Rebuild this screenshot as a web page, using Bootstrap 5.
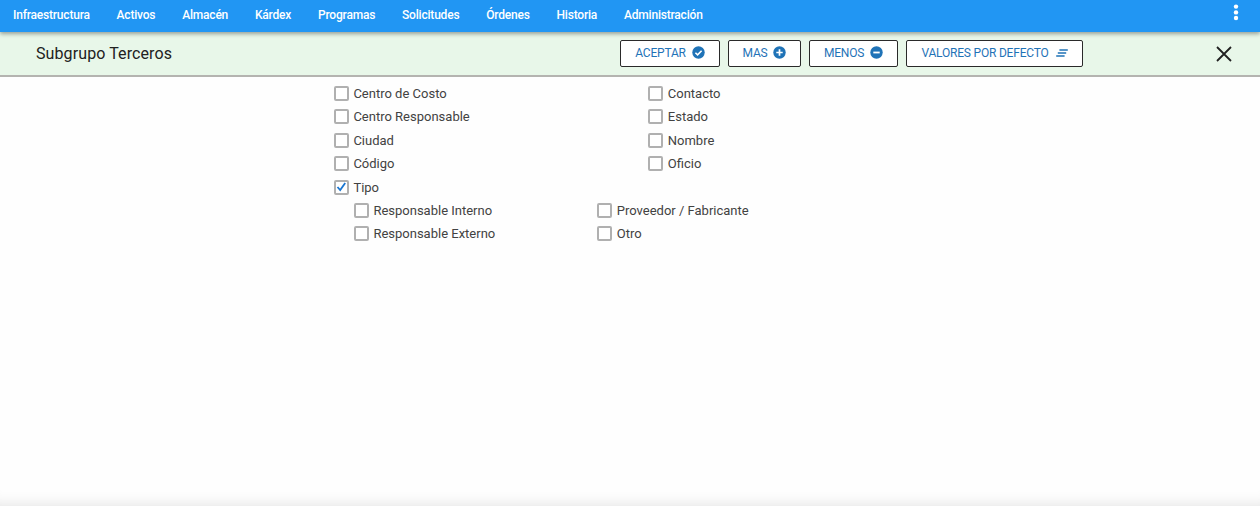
<!DOCTYPE html>
<html lang="es">
<head>
<meta charset="utf-8">
<title>Subgrupo Terceros</title>
<link href="https://cdn.jsdelivr.net/npm/bootstrap@5.3.0/dist/css/bootstrap.min.css" rel="stylesheet">
<style>
html,body{height:100%;margin:0}
body{font-family:Roboto,"Liberation Sans",sans-serif;background:#fefefe;overflow:hidden}
.app-shell{height:506px;display:flex;flex-direction:column;box-shadow:inset 0 -14px 14px -12px rgba(0,0,0,.1)}
.top-bar{height:32px;background:#2196f3;padding:0 13px;box-shadow:0 2px 4px rgba(0,0,0,.35);position:relative;z-index:2;flex:none}
.top-links{display:flex;gap:26.85px}
.top-links a{color:#fff;font-size:12px;font-weight:500;letter-spacing:-.2px;text-decoration:none;line-height:30px;white-space:nowrap}
.dots-ico{display:block;position:absolute;right:21px;top:4px}
.title-bar{height:45px;flex:none;background:#e8f7e9;border-bottom:2px solid #b4b4b0;padding-left:36px;position:relative}
.title-txt{font-size:16px;color:#212121;letter-spacing:.1px;width:584px;flex:none;padding-top:1px}
.act-btn{height:27px;border:1px solid #2a2a2a;border-radius:2px;background:#fff;color:#1f73b7;font-size:12px;letter-spacing:-.2px;display:flex;align-items:center;justify-content:center;gap:6px;padding:0 0 2px;white-space:nowrap;line-height:1}
.close-ico{position:absolute;left:1216px;top:14px}
.form-zone{padding:4.6px 0 0 334px;font-size:13px;color:#424242}
.opt-grid{display:grid;grid-template-columns:314.4px auto;width:500px}
.sub-grid{display:grid;grid-template-columns:243.4px auto;margin-left:20px;width:430px}
.opt{display:flex;align-items:center;gap:4.4px;height:23.5px;white-space:nowrap}
.sub-grid .opt{height:23px}
.tick{width:15px;height:15px;border:2px solid #b0b0b0;border-radius:2px;background:#fff;flex:none;display:flex;align-items:center;justify-content:center}
</style>
</head>
<body>
<div class="app-shell">
  <nav class="top-bar">
    <div class="top-links">
      <a href="#">Infraestructura</a><a href="#">Activos</a><a href="#">Almacén</a><a href="#">Kárdex</a><a href="#">Programas</a><a href="#">Solicitudes</a><a href="#">Órdenes</a><a href="#">Historia</a><a href="#">Administración</a>
    </div>
    <svg class="dots-ico" width="6" height="18" viewBox="0 0 6 18" fill="#fff"><circle cx="3" cy="2.6" r="2.2"/><circle cx="3" cy="8.4" r="2.2"/><circle cx="3" cy="14" r="2.2"/></svg>
  </nav>
  <div class="title-bar d-flex align-items-center">
    <div class="title-txt">Subgrupo Terceros</div>
    <div class="d-flex gap-2">
      <button class="act-btn" style="width:100px">ACEPTAR
        <svg width="13" height="13" viewBox="0 0 13 13"><circle cx="6.5" cy="6.5" r="6.2" fill="#1f73b7"/><path d="M3.4 6.7l2.2 2.2 4-4.2" fill="none" stroke="#fff" stroke-width="1.6"/></svg></button>
      <button class="act-btn" style="width:73px">MAS
        <svg width="13" height="13" viewBox="0 0 13 13"><circle cx="6.5" cy="6.5" r="6.2" fill="#1f73b7"/><path d="M3.3 6.5h6.4M6.5 3.3v6.4" fill="none" stroke="#fff" stroke-width="1.7"/></svg></button>
      <button class="act-btn" style="width:89px">MENOS
        <svg width="13" height="13" viewBox="0 0 13 13"><circle cx="6.5" cy="6.5" r="6.2" fill="#1f73b7"/><path d="M3.3 6.5h6.4" fill="none" stroke="#fff" stroke-width="1.8"/></svg></button>
      <button class="act-btn" style="width:177px;gap:7px">VALORES POR DEFECTO
        <svg width="12" height="8" viewBox="0 0 12 8" fill="none" stroke="#1f73b7" stroke-width="1.4"><path d="M3.4 1h8.4M1.8 4h8.4M.2 7h8.4"/></svg></button>
    </div>
    <svg class="close-ico" width="16" height="16" viewBox="0 0 16 16" fill="none" stroke="#212121" stroke-width="1.8"><path d="M1 1l14 14M15 1L1 15"/></svg>
  </div>
  <div class="form-zone">
    <div class="opt-grid">
      <label class="opt"><span class="tick"></span>Centro de Costo</label>
      <label class="opt"><span class="tick"></span>Contacto</label>
      <label class="opt"><span class="tick"></span>Centro Responsable</label>
      <label class="opt"><span class="tick"></span>Estado</label>
      <label class="opt"><span class="tick"></span>Ciudad</label>
      <label class="opt"><span class="tick"></span>Nombre</label>
      <label class="opt"><span class="tick"></span>Código</label>
      <label class="opt"><span class="tick"></span>Oficio</label>
      <label class="opt"><span class="tick"><svg width="11" height="10" viewBox="0 0 11 10" fill="none" stroke="#1976d2" stroke-width="1.8"><path d="M1.5 5l2.7 3 5-7"/></svg></span>Tipo</label>
    </div>
    <div class="sub-grid">
      <label class="opt"><span class="tick"></span>Responsable Interno</label>
      <label class="opt"><span class="tick"></span>Proveedor / Fabricante</label>
      <label class="opt"><span class="tick"></span>Responsable Externo</label>
      <label class="opt"><span class="tick"></span>Otro</label>
    </div>
  </div>
</div>
<script src="https://cdn.jsdelivr.net/npm/bootstrap@5.3.0/dist/js/bootstrap.bundle.min.js"></script>
</body>
</html>
